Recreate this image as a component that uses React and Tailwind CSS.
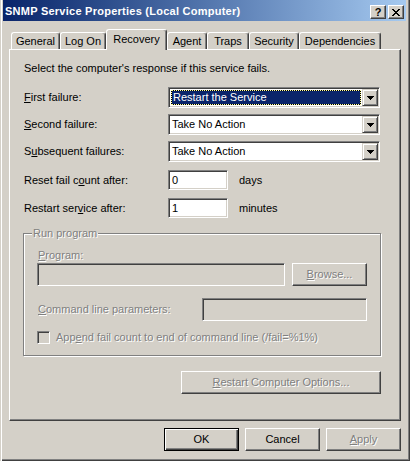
import React from 'react';

// classic 3D edges
const sunken =
  'border border-t-[#808080] border-l-[#808080] border-b-white border-r-white shadow-[inset_1px_1px_0_#404040,inset_-1px_-1px_0_#d4d0c8]';
const raised =
  'border border-t-white border-l-white border-b-[#404040] border-r-[#404040] shadow-[inset_-1px_-1px_0_#808080] bg-[#d4d0c8]';
const dropBtn =
  'border border-t-[#d4d0c8] border-l-[#d4d0c8] border-b-[#404040] border-r-[#404040] shadow-[inset_1px_1px_0_#fff,inset_-1px_-1px_0_#808080] bg-[#d4d0c8]';
const dim = 'text-[#808080] [text-shadow:1px_1px_0_#fff]';

const U = ({ children }) => <span className="underline">{children}</span>;

const Arrow = () => (
  <svg width="7" height="4" viewBox="0 0 7 4" shapeRendering="crispEdges">
    <path d="M0 0h7v1H0zM1 1h5v1H1zM2 2h3v1H2zM3 3h1v1H3z" fill="#000" />
  </svg>
);

const CloseGlyph = () => (
  <svg width="8" height="7" viewBox="0 0 8 7" shapeRendering="crispEdges">
    <path
      d="M0 0h2v1H0zM6 0h2v1H6zM1 1h2v1H1zM5 1h2v1H5zM2 2h4v1H2zM3 3h2v1H3zM2 4h4v1H2zM1 5h2v1H1zM5 5h2v1H5zM0 6h2v1H0zM6 6h2v1H6z"
      fill="#000"
    />
  </svg>
);

const TitleBar = () => (
  <div className="h-[21px] flex items-start pl-[2px] pr-[2px] bg-gradient-to-r from-[#0a246a] to-[#a6caf0]">
    <span className="mt-[5px] font-bold text-white leading-[13px] tracking-[0.25px]">
      SNMP Service Properties (Local Computer)
    </span>
    <div className="ml-auto mt-[5px] flex gap-[2px]">
      <div className={`w-[16px] h-[14px] flex items-center justify-center font-bold text-[11px] leading-none ${raised}`}>
        ?
      </div>
      <div className={`w-[16px] h-[14px] flex items-center justify-center ${raised}`}>
        <CloseGlyph />
      </div>
    </div>
  </div>
);

const tabs = [
  { label: 'General', w: 'w-[49px]' },
  { label: 'Log On', w: 'w-[46px]' },
  { label: 'Recovery', w: 'w-[61px]', active: true },
  { label: 'Agent', w: 'w-[40px]' },
  { label: 'Traps', w: 'w-[42px]' },
  { label: 'Security', w: 'w-[50px]' },
  { label: 'Dependencies', w: 'w-[82px]' },
];

const Tabs = () => (
  <div className="relative z-10 flex h-[21px] mt-[8px] pl-[2px]">
    {tabs.map((t) =>
      t.active ? (
        <div
          key={t.label}
          className={`${t.w} h-[21px] bg-[#d4d0c8] rounded-t-[3px] border-t border-l border-r border-t-white border-l-white border-r-[#404040] shadow-[inset_-1px_0_0_#808080] text-center pt-[3px]`}
        >
          {t.label}
        </div>
      ) : (
        <div
          key={t.label}
          className={`${t.w} mt-[3px] h-[17px] bg-[#d4d0c8] rounded-t-[3px] border-t border-l border-r border-t-white border-l-white border-r-[#404040] shadow-[inset_-1px_0_0_#808080] text-center pt-[2px]`}
        >
          {t.label}
        </div>
      )
    )}
  </div>
);

const Combo = ({ value, focused }) => (
  <div className={`w-[212px] h-[21px] bg-white p-px flex ${sunken}`}>
    <div className="flex-1 min-w-0 flex items-center">
      {focused ? (
        <div className="bg-black h-[15px] w-full mx-px">
          <div className="h-full border border-dotted border-[#ffffa0] bg-[#0a246a] bg-clip-padding text-white pl-px leading-[13px]">
            {value}
          </div>
        </div>
      ) : (
        <span className="pl-[2px]">{value}</span>
      )}
    </div>
    <div className={`w-[16px] h-full flex items-center justify-center ${dropBtn}`}>
      <Arrow />
    </div>
  </div>
);

const Edit = ({ value }) => (
  <div className={`w-[60px] h-[20px] bg-white flex items-center pl-[3px] ${sunken}`}>{value}</div>
);

const Panel = () => (
  <div className="-mt-px h-[372px] border border-t-white border-l-white border-b-[#404040] border-r-[#404040] shadow-[inset_-1px_-1px_0_#808080] pl-[14px] pt-[12px]">
    <p>Select the computer's response if this service fails.</p>

    <div className="mt-[12px] flex flex-col gap-[6px]">
      <div className="flex items-center h-[21px]">
        <span className="w-[144px]">
          <U>F</U>irst failure:
        </span>
        <Combo value="Restart the Service" focused />
      </div>
      <div className="flex items-center h-[21px]">
        <span className="w-[144px]">
          <U>S</U>econd failure:
        </span>
        <Combo value="Take No Action" />
      </div>
      <div className="flex items-center h-[21px]">
        <span className="w-[144px]">
          S<U>u</U>bsequent failures:
        </span>
        <Combo value="Take No Action" />
      </div>
    </div>

    <div className="mt-[8px] flex flex-col gap-[8px]">
      <div className="flex items-center h-[20px]">
        <span className="w-[144px]">
          Reset fail c<U>o</U>unt after:
        </span>
        <Edit value="0" />
        <span className="ml-[11px]">days</span>
      </div>
      <div className="flex items-center h-[20px]">
        <span className="w-[144px]">
          Restart ser<U>v</U>ice after:
        </span>
        <Edit value="1" />
        <span className="ml-[11px]">minutes</span>
      </div>
    </div>

    <div className="relative mt-[15px] -ml-px w-[358px] h-[123px] border border-[#808080] shadow-[inset_1px_1px_0_#fff,1px_1px_0_#fff] pl-[13px] pt-[15px]">
      <span className={`absolute left-[8px] -top-[7px] px-px bg-[#d4d0c8] ${dim}`}>Run program</span>

      <div className={`pl-px ${dim}`}>
        <U>P</U>rogram:
      </div>
      <div className="mt-px flex gap-[7px]">
        <div className={`w-[248px] h-[23px] bg-[#d4d0c8] ${sunken}`} />
        <div className={`w-[75px] h-[23px] flex items-center justify-center ${raised} ${dim}`}>
          <span>
            <U>B</U>rowse...
          </span>
        </div>
      </div>

      <div className="mt-[12px] flex items-center h-[23px]">
        <span className={`w-[165px] pl-px ${dim}`}>
          <U>C</U>ommand line parameters:
        </span>
        <div className={`w-[165px] h-[23px] bg-[#d4d0c8] ${sunken}`} />
      </div>

      <div className="mt-[10px] flex items-center h-[13px]">
        <div className={`w-[13px] h-[13px] bg-[#d4d0c8] ${sunken}`} />
        <span className={`ml-[6px] ${dim}`}>
          App<U>e</U>nd fail count to end of command line (/fail=%1%)
        </span>
      </div>
    </div>

    <div className="-ml-px mt-[15px] w-[358px] flex justify-end">
      <div className={`w-[200px] h-[23px] flex items-center justify-center ${raised} ${dim}`}>
        <span>
          <U>R</U>estart Computer Options...
        </span>
      </div>
    </div>
  </div>
);

const Buttons = () => (
  <div className="mt-[7px] flex justify-end gap-[6px]">
    <div className="w-[75px] h-[23px] flex items-center justify-center bg-[#d4d0c8] border border-black shadow-[inset_1px_1px_0_#fff,inset_-1px_-1px_0_#404040,inset_-2px_-2px_0_#808080]">
      OK
    </div>
    <div className={`w-[75px] h-[23px] flex items-center justify-center ${raised}`}>Cancel</div>
    <div className={`w-[75px] h-[23px] flex items-center justify-center ${raised} ${dim}`}>
      <span>
        <U>A</U>pply
      </span>
    </div>
  </div>
);

export default function App() {
  return (
    <div className="w-[410px] h-[461px] overflow-hidden bg-[#d4d0c8] pl-[3px] pr-[4px] font-['Liberation_Sans',Arial,sans-serif] text-[11px] leading-[13px] text-black shadow-[inset_1px_0_0_#d4d0c8,inset_2px_0_0_#fff,inset_-1px_-1px_0_#404040,inset_-2px_-2px_0_#808080]">
      <TitleBar />
      <div className="ml-[6px] w-[392px]">
        <Tabs />
        <Panel />
        <Buttons />
      </div>
    </div>
  );
}
